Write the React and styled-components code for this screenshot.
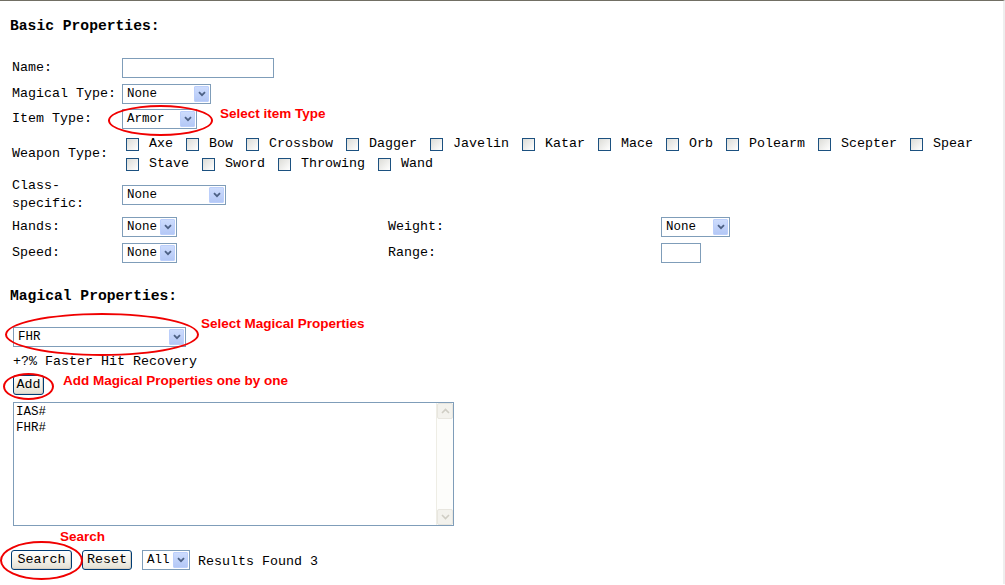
import React from "react";
import styled, { createGlobalStyle } from "styled-components";

const GlobalStyle = createGlobalStyle`
  body {
    margin: 0;
    background: #fff;
    color: #000;
    font-family: "Liberation Mono", "DejaVu Sans Mono", monospace;
    font-size: 13.33px;
  }
`;

const Page = styled.div`
  border-top: 1px solid #716f64;
  border-right: 2px solid #eeeeee;
  min-height: 584px;
  box-sizing: border-box;
  padding-left: 10px;
`;

const Heading = styled.h3`
  margin: ${(p) => p.$top}px 0 0;
  font-size: 14.67px;
  font-weight: bold;
  line-height: 18px;
`;

const FormGrid = styled.div`
  display: grid;
  grid-template-columns: 110px 266px 273px 1fr;
  grid-template-rows: 26px 25px 25px 46px 35px 30px 22px;
  margin: 20px 0 0 2px;
  align-items: center;
  line-height: 18px;
`;

const Label = styled.div`
  padding-right: 6px;
`;

const Cell = styled.div`
  display: flex;
  align-items: center;
  grid-column: ${(p) => p.$span || "auto"};
`;

const TextInput = styled.input`
  box-sizing: border-box;
  width: ${(p) => p.$w}px;
  height: 20px;
  border: 1px solid #7f9db9;
  padding: 0 3px;
  font: inherit;
  outline: none;
`;

const SelectBox = styled.span`
  box-sizing: border-box;
  display: inline-flex;
  align-items: center;
  justify-content: space-between;
  width: ${(p) => p.$w}px;
  height: 20px;
  border: 1px solid #7f9db9;
  padding: 0 1px 0 4px;
  background: #fff;
  font-size: 12.5px;
  line-height: 16px;
  flex-shrink: 0;
`;

const ArrowBtn = styled.span`
  display: flex;
  align-items: center;
  justify-content: center;
  width: 15px;
  height: 16px;
  box-sizing: border-box;
  border: 1px solid #bccffb;
  border-radius: 1px;
  background: linear-gradient(#cddcfd, #b4c8f6);
`;

const Select = ({ value, w }) => (
  <SelectBox $w={w}>
    <span>{value}</span>
    <ArrowBtn>
      <svg width="8" height="6" viewBox="0 0 8 6">
        <path d="M1 1.2 L4 4.2 L7 1.2" fill="none" stroke="#4d6185" strokeWidth="1.8" />
      </svg>
    </ArrowBtn>
  </SelectBox>
);

const Checks = styled.div`
  display: flex;
  flex-wrap: wrap;
  column-gap: 13px;
  row-gap: 2px;
  padding-left: 4px;
  line-height: 18px;
  width: 870px;
`;

const CheckItem = styled.label`
  display: inline-flex;
  align-items: center;
  gap: 10px;
`;

const Box = styled.span`
  width: 13px;
  height: 13px;
  box-sizing: border-box;
  border: 1px solid #1c5180;
  background: linear-gradient(135deg, #dcdcd7, #ffffff);
`;

const Anchor = styled.span`
  position: relative;
  display: inline-flex;
`;

const Ring = styled.span`
  position: absolute;
  top: ${(p) => p.$t}px;
  right: ${(p) => p.$r}px;
  bottom: ${(p) => p.$b}px;
  left: ${(p) => p.$l}px;
  border: 2px solid #f00000;
  border-radius: 50%;
  pointer-events: none;
`;

const Note = styled.span`
  color: #ff0000;
  font-family: "Liberation Sans", Arial, sans-serif;
  font-weight: bold;
  font-size: 13.5px;
  line-height: 16px;
  margin-left: ${(p) => p.$ml}px;
  margin-top: ${(p) => p.$mt || 0}px;
  align-self: flex-start;
  white-space: nowrap;
`;

const Section = styled.div`
  padding-left: ${(p) => p.$pl}px;
  margin-top: ${(p) => p.$mt}px;
  display: flex;
  align-items: ${(p) => p.$align || "center"};
  line-height: 16px;
`;

const Button = styled.button`
  box-sizing: border-box;
  width: ${(p) => p.$w}px;
  height: 20px;
  padding: 0;
  margin-left: ${(p) => p.$ml || 0}px;
  border: 1px solid #003c74;
  border-radius: 3px;
  background: linear-gradient(#ffffff, #f1efe6 60%, #e3dfd2);
  box-shadow: inset -1px -1px 0 #d6d0c5;
  font: inherit;
  color: #000;
`;

const ListBox = styled.div`
  box-sizing: border-box;
  width: 441px;
  height: 124px;
  border: 1px solid #7f9db9;
  display: flex;
  font-size: 12.5px;
  line-height: 16px;
`;

const ListText = styled.div`
  flex: 1;
  padding: 1px 2px;
`;

const ScrollBar = styled.div`
  width: 16px;
  display: flex;
  flex-direction: column;
  justify-content: space-between;
  border-left: 1px solid #eeede5;
  background: #fdfdfb;
`;

const ScrollBtn = styled.div`
  height: 16px;
  box-sizing: border-box;
  border: 1px solid #e8e6df;
  border-radius: 2px;
  background: #f3f2ed;
  display: flex;
  align-items: center;
  justify-content: center;
`;

const Spacer = styled.span`
  display: inline-flex;
  margin-left: 10px;
`;

const Results = styled.span`
  margin-left: 8px;
  margin-top: 4px;
  font-size: 13.33px;
`;

const weapons = [
  "Axe", "Bow", "Crossbow", "Dagger", "Javelin", "Katar", "Mace", "Orb",
  "Polearm", "Scepter", "Spear", "Stave", "Sword", "Throwing", "Wand",
];

const Chevron = ({ up }) => (
  <svg width="9" height="6" viewBox="0 0 9 6">
    <path d={up ? "M1 5 L4.5 1.5 L8 5" : "M1 1 L4.5 4.5 L8 1"} fill="none" stroke="#cfcdc4" strokeWidth="1.6" />
  </svg>
);

export default function App() {
  return (
    <Page>
      <GlobalStyle />
      <Heading $top={16}>Basic Properties:</Heading>
      <FormGrid>
        <Label>Name:</Label>
        <Cell $span="span 3">
          <TextInput $w={152} />
        </Cell>

        <Label>Magical Type:</Label>
        <Cell $span="span 3">
          <Select value="None" w={89} />
        </Cell>

        <Label>Item Type:</Label>
        <Cell $span="span 3">
          <Anchor>
            <Select value="Armor" w={75} />
            <Ring $t={-4} $r={-16} $b={-7} $l={-14} />
          </Anchor>
          <Note $ml={23} $mt={-3}>Select item Type</Note>
        </Cell>

        <Label>Weapon Type:</Label>
        <Cell $span="span 3">
          <Checks>
            {weapons.map((w) => (
              <CheckItem key={w}>
                <Box />
                {w}
              </CheckItem>
            ))}
          </Checks>
        </Cell>

        <Label>Class-specific:</Label>
        <Cell $span="span 3">
          <Select value="None" w={104} />
        </Cell>

        <Label>Hands:</Label>
        <Cell>
          <Select value="None" w={55} />
        </Cell>
        <Label>Weight:</Label>
        <Cell>
          <Select value="None" w={69} />
        </Cell>

        <Label>Speed:</Label>
        <Cell>
          <Select value="None" w={55} />
        </Cell>
        <Label>Range:</Label>
        <Cell>
          <TextInput $w={40} />
        </Cell>
      </FormGrid>

      <Heading $top={23}>Magical Properties:</Heading>

      <Section $pl={3} $mt={22}>
        <Anchor>
          <Select value="FHR" w={173} />
          <Ring $t={-14} $r={-13} $b={-9} $l={-8} />
        </Anchor>
        <Note $ml={15} $mt={-11}>Select Magical Properties</Note>
      </Section>

      <Section $pl={3} $mt={7}>+?% Faster Hit Recovery</Section>

      <Section $pl={3} $mt={5}>
        <Anchor>
          <Button $w={31}>Add</Button>
          <Ring $t={-2} $r={-10} $b={-5} $l={-10} />
        </Anchor>
        <Note $ml={19} $mt={-2}>Add Magical Properties one by one</Note>
      </Section>

      <Section $pl={3} $mt={7}>
        <ListBox>
          <ListText>
            <div>IAS#</div>
            <div>FHR#</div>
          </ListText>
          <ScrollBar>
            <ScrollBtn>
              <Chevron up />
            </ScrollBtn>
            <ScrollBtn>
              <Chevron />
            </ScrollBtn>
          </ScrollBar>
        </ListBox>
      </Section>

      <Section $pl={50} $mt={3}>
        <Note $ml={0}>Search</Note>
      </Section>

      <Section $pl={1} $mt={5} $align="center">
        <Anchor>
          <Button $w={61}>Search</Button>
          <Ring $t={-9} $r={-11} $b={-10} $l={-11} />
        </Anchor>
        <Button $w={50} $ml={10}>Reset</Button>
        <Spacer>
          <Select value="All" w={48} />
        </Spacer>
        <Results>Results Found 3</Results>
      </Section>
    </Page>
  );
}
